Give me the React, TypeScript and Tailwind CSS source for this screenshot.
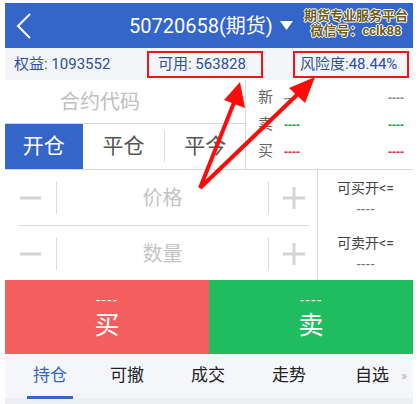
import React from 'react';

const font = "font-['Roboto','Noto_Sans_CJK_SC',sans-serif]";
const dash = "font-['Liberation_Sans',sans-serif]";

function Header() {
	return (
		<div className="relative flex h-[45px] items-center bg-[#3465c9] text-white">
			<svg width="16" height="26" viewBox="0 0 16 26" className="ml-[11px]">
				<path d="M14 1 L2 13 L14 25" fill="none" stroke="white" strokeWidth="2" />
			</svg>
			<div className="ml-[97px] flex items-center text-[20px] leading-none">
				<span>50720658(期货)</span>
				<svg width="13" height="10" viewBox="0 0 13 10" className="ml-[7px]">
					<path d="M0 0 L13 0 L6.5 9 Z" fill="white" />
				</svg>
			</div>
			<div className="absolute right-[5px] top-[5px] flex flex-col items-center text-[13px] font-bold leading-[15px] text-[#6e5c1c] [text-shadow:0_0_1px_#fff,1px_0_0_#fff,-1px_0_0_#fff,0_1px_0_#fff,0_-1px_0_#fff]">
				<span>期货专业服务平台</span>
				<span>微信号：cclk88</span>
			</div>
		</div>
	);
}

function InfoBar() {
	return (
		<div className="flex h-[32px] items-center bg-[#f3f5f9] text-[15px] text-[#2c4f9e]">
			<span className="ml-[9px] w-[133px]">权益: 1093552</span>
			<span className="box-border flex h-[27px] w-[116px] items-center border-2 border-[#e81818] pl-[9px]">
				可用: 563828
			</span>
			<span className="ml-[30px] box-border flex h-[27px] w-[116px] items-center border-2 border-[#e81818] pl-[5px]">
				风险度:48.44%
			</span>
		</div>
	);
}

function QuoteRow({ label, color, left }: { label: string; color: string; left?: string }) {
	return (
		<div className="flex h-[27px] items-center text-[15px]">
			<span className="ml-[12px] w-[26px] text-[#666]">{label}</span>
			<span className={`w-[104px] text-[12px] font-bold ${dash} ${color}`}>{left ?? '----'}</span>
			<span className={`text-[12px] font-bold ${dash} ${color}`}>----</span>
		</div>
	);
}

function Stepper({ label }: { label: string }) {
	return (
		<div className="flex h-[55px] items-center">
			<div className="flex w-[38px] items-center pl-[2px]">
				<svg width="21" height="4" viewBox="0 0 21 4">
					<rect width="21" height="3" y="0.5" fill="#d4d4d4" />
				</svg>
			</div>
			<div className="h-[33px] w-px bg-[#dcdcdc]" />
			<span className="flex-1 text-center text-[20px] text-[#c4c4c4]">{label}</span>
			<div className="h-[33px] w-px bg-[#dcdcdc]" />
			<div className="flex w-[40px] items-center pl-[14px]">
				<svg width="22" height="22" viewBox="0 0 22 22">
					<rect x="0" y="9.5" width="22" height="3" fill="#d4d4d4" />
					<rect x="9.5" y="0" width="3" height="22" fill="#d4d4d4" />
				</svg>
			</div>
		</div>
	);
}

export default function App() {
	return (
		<div className={`relative h-[404px] w-[420px] overflow-hidden bg-white pl-[5px] pr-[7px] pt-[3px] ${font}`}>
			<Header />
			<InfoBar />

			<div className="flex h-[90px]">
				<div className="w-[240px]">
					<div className="flex h-[44px] items-center border-b border-[#d8d8d8] pl-[55px] text-[20px] text-[#c0c0c0]">
						合约代码
					</div>
					<div className="flex h-[46px] items-center border-b border-[#d8d8d8] text-[21px]">
						<div className="flex h-full w-[78px] items-center justify-center bg-[#3465c9] text-white">开仓</div>
						<div className="flex w-[82px] justify-center text-[#555]">平仓</div>
						<div className="h-[31px] w-px bg-[#dcdcdc]" />
						<div className="flex w-[80px] justify-center text-[#555]">平今</div>
					</div>
				</div>
				<div className="flex-1 border-b border-l border-[#d8d8d8] pt-[4px]">
					<QuoteRow label="新" color="text-[#888]" left="—" />
					<QuoteRow label="卖" color="text-[#17a83a]" />
					<QuoteRow label="买" color="text-[#d8303c]" />
				</div>
			</div>

			<div className="flex h-[110px]">
				<div className="w-[312px] pl-[13px] pr-[8px]">
					<Stepper label="价格" />
					<div className="h-px bg-[#dcdcdc]" />
					<Stepper label="数量" />
				</div>
				<div className="flex flex-1 flex-col items-center border-l border-[#d8d8d8] pt-[7px] text-[14px] text-[#444]">
					<span className="leading-[22px]">可买开&lt;=</span>
					<span className={`leading-[20px] text-[#777] ${dash}`}>----</span>
					<span className="mt-[13px] leading-[22px]">可卖开&lt;=</span>
					<span className={`leading-[20px] text-[#777] ${dash}`}>----</span>
				</div>
			</div>

			<div className="flex h-[74px] text-white">
				<div className="flex w-[204px] flex-col items-center justify-center bg-[#f45e5e]">
					<span className={`text-[14px] leading-[18px] tracking-[1px] ${dash}`}>----</span>
					<span className="text-[25px] leading-[34px]">买</span>
				</div>
				<div className="flex flex-1 flex-col items-center justify-center bg-[#1fbd5f]">
					<span className={`text-[14px] leading-[18px] tracking-[1px] ${dash}`}>----</span>
					<span className="text-[25px] leading-[34px]">卖</span>
				</div>
			</div>

			<div className="flex h-[44px] items-center bg-[#f4f6f9] text-[17px] text-[#222]">
				<div className="relative ml-[22px] flex w-[46px] justify-center text-[#3465c9]">
					持仓
					<div className="absolute -bottom-[10px] left-0 h-[3px] w-[46px] bg-[#3465c9]" />
				</div>
				<span className="ml-[37px]">可撤</span>
				<span className="ml-[47px]">成交</span>
				<span className="ml-[47px]">走势</span>
				<span className="ml-[49px]">自选</span>
				<span className="ml-[12px] text-[13px] text-[#aaa]">»</span>
			</div>
			<div className="h-[6px] bg-[#eceef2]" />

			<svg className="pointer-events-none absolute left-0 top-0" width="420" height="404" viewBox="0 0 420 404">
				<g stroke="#ff0a0a" strokeWidth="4" fill="none">
					<line x1="200" y1="188" x2="235" y2="100" />
					<line x1="200" y1="188" x2="300" y2="92" />
				</g>
				<g fill="#ff0a0a">
					<path d="M240 82 L245 108 L224 100 Z" />
					<path d="M315 77 L305 103 L289 88 Z" />
				</g>
			</svg>
		</div>
	);
}
